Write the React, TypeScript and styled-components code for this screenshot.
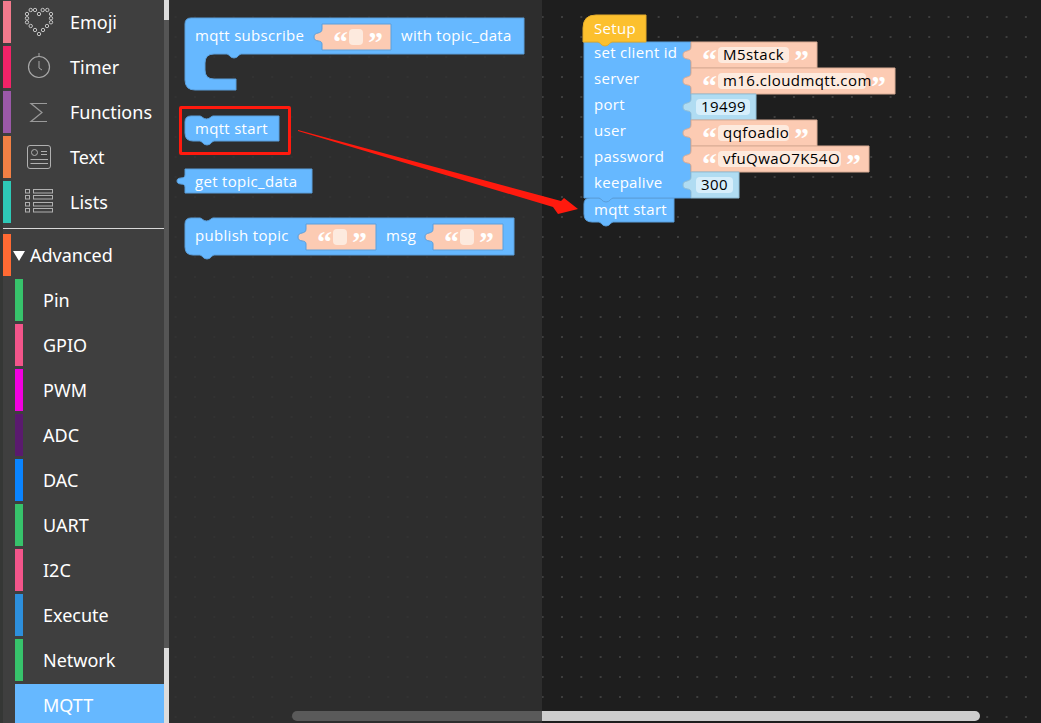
import React from "react";
import styled, { createGlobalStyle } from "styled-components";

const BLUE = "#66b8ff";
const EDGE = "#5a9fdc";
const PEACH = "#fccbb3";
const PEACH_FIELD = "#fdeade";
const PEACH_EDGE = "#d8ab94";
const SKY = "#b0dcf2";
const SKY_FIELD = "#d6eefb";
const SKY_EDGE = "#8fbdd6";

const topCategories = [
  { label: "Emoji", color: "#f27a8c", icon: "emoji" },
  { label: "Timer", color: "#f22368", icon: "timer" },
  { label: "Functions", color: "#9b59a8", icon: "sigma" },
  { label: "Text", color: "#f28044", icon: "text" },
  { label: "Lists", color: "#2ec9b7", icon: "lists" },
];

const subCategories = [
  { label: "Pin", color: "#37c26b" },
  { label: "GPIO", color: "#f2558a" },
  { label: "PWM", color: "#f200e0" },
  { label: "ADC", color: "#5a1a6e" },
  { label: "DAC", color: "#0a84ff" },
  { label: "UART", color: "#37c26b" },
  { label: "I2C", color: "#f2558a" },
  { label: "Execute", color: "#2d8fdc" },
  { label: "Network", color: "#37c26b" },
  { label: "MQTT", color: BLUE, selected: true },
];

const setupRows = [
  { label: "set client id", kind: "string", width: 126, fieldWidth: 71, value: "M5stack" },
  { label: "server", kind: "string", width: 204, fieldWidth: 148, value: "m16.cloudmqtt.com" },
  { label: "port", kind: "number", width: 65, fieldWidth: 54, value: "19499" },
  { label: "user", kind: "string", width: 126, fieldWidth: 71, value: "qqfoadio" },
  { label: "password", kind: "string", width: 178, fieldWidth: 123, value: "vfuQwaO7K54O" },
  { label: "keepalive", kind: "number", width: 48, fieldWidth: 37, value: "300" },
];

// notch on the top edge of a statement block, left to right
const notch = (x: number) => `H${x} c2 0 3 3 6.5 3 s4.5 -3 6.5 -3`;
// connector under a statement block, right to left
const bump = (x: number, y: number) => `H${x + 14} c-2 0 -3 4 -7 4 s-5 -4 -7 -4 V${y}`;

const statementPath = (w: number, h: number) =>
  `M0 6 Q0 0 6 0 ${notch(15)} H${w} V${h} ${bump(15, h)} H8 Q0 ${h} 0 ${h - 8} Z`;

const slotPath = (x: number, y: number, w: number, h: number) =>
  `M${x} ${y} H${x + w} V${y + h} H${x} V${y + 20} c0 -5 -8 -1 -8 -7 s8 -2 8 -8 Z`;

const Slot = ({
  x,
  y,
  width,
  fieldWidth,
  kind,
  value,
  edge,
}: {
  x: number;
  y: number;
  width: number;
  fieldWidth: number;
  kind: string;
  value?: string;
  edge?: string;
}) => {
  const isString = kind === "string";
  const fieldX = isString ? x + 27 : x + 5;
  return (
    <g>
      <SlotShape
        d={slotPath(x, y, width, 26)}
        $fill={isString ? PEACH : SKY}
        $edge={edge || (isString ? PEACH_EDGE : SKY_EDGE)}
      />
      {isString && <Quote x={x + 11} y={y + 28}>“</Quote>}
      <rect x={fieldX} y={y + 5} width={fieldWidth} height={16} rx={4} fill={isString ? PEACH_FIELD : SKY_FIELD} />
      {value && <FieldText x={fieldX + 5} y={y + 18}>{value}</FieldText>}
      {isString && <Quote x={fieldX + fieldWidth + 5} y={y + 28}>”</Quote>}
    </g>
  );
};

const EmojiIcon = () => {
  const beads = [
    [30.7, 10], [35, 10], [42.7, 10], [47.3, 10], [27, 14], [39, 14], [51, 14], [27, 18.3], [51, 18.3],
    [27, 22.3], [51, 22.3], [30.7, 26], [47, 26], [35, 30], [43, 30], [39, 34],
  ];
  return (
    <CategoryIcon viewBox="0 1 56 42">
      {beads.map(([cx, cy]) => (
        <circle key={`${cx}-${cy}`} cx={cx - 11} cy={cy} r={1.7} fill="none" stroke="#c4c4c4" />
      ))}
    </CategoryIcon>
  );
};

const TimerIcon = () => (
  <CategoryIcon viewBox="0 1 56 42">
    <circle cx={28} cy={22} r={10.5} fill="none" stroke="#a8a8a8" strokeWidth={1.2} />
    <path d="M28 8 V12 M28 16 V23 L31 25" fill="none" stroke="#a8a8a8" />
  </CategoryIcon>
);

const SigmaIcon = () => (
  <CategoryIcon viewBox="0 1 56 42">
    <path d="M36 13.5 H20 L31 22.5 L20 31.5 H36" fill="none" stroke="#9a9a9a" strokeWidth={1.2} />
  </CategoryIcon>
);

const TextIcon = () => (
  <CategoryIcon viewBox="0 1 56 42">
    <rect x={16.5} y={10.5} width={23} height={23} rx={2.5} fill="none" stroke="#b0b0b0" />
    <circle cx={23.5} cy={17.5} r={3} fill="none" stroke="#b0b0b0" />
    <path d="M30 16.5 H36 M30 19.5 H36 M19.5 24.5 H37 M19.5 28.5 H37" fill="none" stroke="#b0b0b0" />
  </CategoryIcon>
);

const ListsIcon = () => (
  <CategoryIcon viewBox="0 1 56 42">
    {[9.5, 15.5, 22.5, 28.5].map((y) => (
      <g key={y} fill="none" stroke="#b0b0b0">
        <rect x={14.5} y={y} width={4} height={3.5} />
        <rect x={22.5} y={y} width={19} height={3.5} />
      </g>
    ))}
  </CategoryIcon>
);

const categoryIcons: Record<string, React.ReactNode> = {
  emoji: <EmojiIcon />,
  timer: <TimerIcon />,
  sigma: <SigmaIcon />,
  text: <TextIcon />,
  lists: <ListsIcon />,
};

const App = () => {
  return (
    <Page>
      <GlobalStyle />
      <Sidebar>
        <Rail />
        <Menu>
          {topCategories.map((item) => (
            <CategoryRow key={item.label}>
              <ColorBar $color={item.color} />
              {categoryIcons[item.icon]}
              <CategoryLabel>{item.label}</CategoryLabel>
            </CategoryRow>
          ))}
          <Divider />
          <CategoryRow>
            <ColorBar $color="#ff6a33" />
            <Caret />
            <AdvancedLabel>Advanced</AdvancedLabel>
          </CategoryRow>
          {subCategories.map((item) => (
            <SubRow key={item.label} $selected={item.selected}>
              <ColorBar $color={item.color} />
              <SubLabel>{item.label}</SubLabel>
            </SubRow>
          ))}
        </Menu>
        <ScrollTrack>
          <ScrollThumb $height={20} />
          <ScrollThumb $height={75} />
        </ScrollTrack>
      </Sidebar>

      <Flyout>
        <BlockSvg $x={8} $y={10} width={360} height={90}>
          <BlockShape d="M8 14 Q8 8 14 8 H347 V44 H64 c-2 0 -3 4 -7 4 s-5 -4 -7 -4 H37 Q28 44 28 53 V60 Q28 69 37 69 H59 V80 H18 Q8 80 8 70 Z" />
          <BlockText x={18} y={31}>mqtt subscribe</BlockText>
          <Slot x={145} y={14} width={69} fieldWidth={14} kind="string" edge={EDGE} />
          <BlockText x={224} y={31}>with topic_data</BlockText>
        </BlockSvg>

        <BlockSvg $x={8} $y={108} width={120} height={50}>
          <g transform="translate(8 8)">
            <BlockShape d={statementPath(94, 25)} />
            <BlockText x={10} y={18}>mqtt start</BlockText>
          </g>
        </BlockSvg>

        <BlockSvg $x={0} $y={161} width={160} height={40}>
          <BlockShape d="M16 8 H143 V32 H16 V26 c0 -5 -8 -1 -8 -6 s8 -1 8 -6 Z" />
          <BlockText x={26} y={26}>get topic_data</BlockText>
        </BlockSvg>

        <BlockSvg $x={8} $y={210} width={360} height={60}>
          <g transform="translate(8 8)">
            <BlockShape d={statementPath(329, 37)} />
            <BlockText x={10} y={23}>publish topic</BlockText>
            <Slot x={121} y={6} width={70} fieldWidth={14} kind="string" edge={EDGE} />
            <BlockText x={201} y={23}>msg</BlockText>
            <Slot x={248} y={6} width={70} fieldWidth={14} kind="string" edge={EDGE} />
          </g>
        </BlockSvg>
        <FlyoutThumb />
      </Flyout>

      <Workspace>
        <BlockSvg $x={30} $y={5} width={380} height={235}>
          <g transform="translate(12 193)">
            <BlockShape d="M0 6 Q0 0 6 0 H15 c2 0 3 3 6.5 3 s4.5 -3 6.5 -3 H90 V24 H29 c-2 0 -3 4 -7 4 s-5 -4 -7 -4 H8 Q0 24 0 16 Z" />
            <BlockText x={10} y={17}>mqtt start</BlockText>
          </g>
          <g transform="translate(12 37)">
            <BlockShape d="M0 0 H107 V156 H29 c-2 0 -3 4 -7 4 s-5 -4 -7 -4 H0 Z" />
            {setupRows.map((row, i) => (
              <g key={row.label}>
                <BlockText x={10} y={16 + i * 26}>{row.label}</BlockText>
                <Slot
                  x={107}
                  y={i * 26}
                  width={row.width}
                  fieldWidth={row.fieldWidth}
                  kind={row.kind}
                  value={row.value}
                />
              </g>
            ))}
          </g>
          <g transform="translate(11 10)">
            <HatShape d="M0 27 V13 Q0 0 13 0 H63 V27 H29 c-2 0 -3 4 -7 4 s-5 -4 -7 -4 Z" />
            <BlockText x={11} y={19}>Setup</BlockText>
          </g>
        </BlockSvg>
        <WorkspaceThumb />
      </Workspace>

      <AnnotationBox />
      <AnnotationArrow viewBox="0 0 300 100" width={300} height={100}>
        <polygon points="0,0 263,71 266,68 280,79 260,84 255,77 0,1" fill="#ff1a0e" />
      </AnnotationArrow>
    </Page>
  );
};

const GlobalStyle = createGlobalStyle`
  html, body {
    margin: 0;
    padding: 0;
    height: 100%;
    overflow: hidden;
    background: #1e1e1e;
  }
`;

const Page = styled.div`
  position: relative;
  display: flex;
  width: 100%;
  height: 100vh;
  overflow: hidden;
  font-family: "Noto Sans", "Open Sans", sans-serif;
`;

const Sidebar = styled.aside`
  display: flex;
  flex: 0 0 169px;
  height: 100%;
  background: #3f3f3f;
`;

const Rail = styled.div`
  flex: 0 0 3px;
  background: #353735;
`;

const Menu = styled.nav`
  display: flex;
  flex: 1;
  flex-direction: column;
  gap: 3px;
  min-width: 0;
  padding-top: 1px;
  overflow: hidden;
`;

const CategoryRow = styled.div`
  display: flex;
  flex: 0 0 42px;
  align-items: center;
  min-height: 0;
`;

const SubRow = styled.div<{ $selected?: boolean }>`
  display: flex;
  flex: 0 0 42px;
  align-items: center;
  min-height: 0;
  margin-left: 12px;
  background: ${(p) => (p.$selected ? BLUE : "transparent")};
`;

const ColorBar = styled.span<{ $color: string }>`
  flex: 0 0 8px;
  align-self: stretch;
  background: ${(p) => p.$color};
`;

const CategoryIcon = styled.svg`
  flex: 0 0 56px;
  width: 56px;
  height: 42px;
  margin-right: 3px;
`;

const CategoryLabel = styled.span`
  font-size: 18px;
  line-height: 24px;
  color: #fff;
`;

const AdvancedLabel = styled(CategoryLabel)`
  margin-left: 5px;
`;

const SubLabel = styled(CategoryLabel)`
  margin-left: 20px;
`;

const Caret = styled.span`
  width: 0;
  height: 0;
  margin: 1px 0 0 2px;
  border-top: 10px solid #fff;
  border-left: 6px solid transparent;
  border-right: 6px solid transparent;
`;

const Divider = styled.div`
  flex: 0 0 1px;
  margin: 2px 0;
  background: #d8d8d8;
`;

const ScrollTrack = styled.div`
  display: flex;
  flex: 0 0 5px;
  flex-direction: column;
  justify-content: space-between;
  background: #555;
`;

const ScrollThumb = styled.div<{ $height: number }>`
  height: ${(p) => p.$height}px;
  background: #dcdcdc;
`;

const Flyout = styled.section`
  position: relative;
  flex: 0 0 373px;
  height: 100%;
  background-color: #2d2d2d;
  background-image: radial-gradient(circle at center, #3c3c3c 0.5px, transparent 0.8px);
  background-size: 19.33px 20px;
  background-position: -3px 7px;
`;

const Workspace = styled.main`
  position: relative;
  flex: 1;
  height: 100%;
  background-color: #1e1e1e;
  background-image: radial-gradient(circle at center, #7a7a7a 0.5px, transparent 0.8px);
  background-size: 19.33px 20px;
  background-position: -9px 7px;
`;

const BlockSvg = styled.svg<{ $x: number; $y: number }>`
  position: absolute;
  left: ${(p) => p.$x}px;
  top: ${(p) => p.$y}px;
  overflow: visible;
`;

const BlockShape = styled.path`
  fill: ${BLUE};
  stroke: ${EDGE};
  stroke-width: 1;
`;

const HatShape = styled.path`
  fill: #fcc02e;
  stroke: #e3ab2a;
  stroke-width: 1;
`;

const SlotShape = styled.path<{ $fill: string; $edge: string }>`
  fill: ${(p) => p.$fill};
  stroke: ${(p) => p.$edge};
  stroke-width: 1;
`;

const BlockText = styled.text`
  font-family: "Open Sans", "Noto Sans", sans-serif;
  font-size: 15px;
  letter-spacing: 0.3px;
  fill: #fff;
`;

const FieldText = styled.text`
  font-family: "Open Sans", "Noto Sans", sans-serif;
  font-size: 15px;
  letter-spacing: 0.45px;
  fill: #000;
`;

const Quote = styled.text`
  font-family: "Liberation Serif", serif;
  font-size: 30px;
  font-weight: bold;
  fill: #fff;
`;

const FlyoutThumb = styled.div`
  position: absolute;
  left: 123px;
  right: 0;
  bottom: 2px;
  height: 10px;
  background: #5a5a5a;
  border-radius: 5px 0 0 5px;
`;

const WorkspaceThumb = styled.div`
  position: absolute;
  left: 0;
  bottom: 2px;
  width: 438px;
  height: 10px;
  background: #cdcdcd;
  border-radius: 0 5px 5px 0;
`;

const AnnotationBox = styled.div`
  position: absolute;
  left: 179px;
  top: 106px;
  width: 106px;
  height: 43px;
  border: 3px solid #ff1a0e;
  border-radius: 2px;
`;

const AnnotationArrow = styled.svg`
  position: absolute;
  left: 298px;
  top: 130px;
`;

export default App;
